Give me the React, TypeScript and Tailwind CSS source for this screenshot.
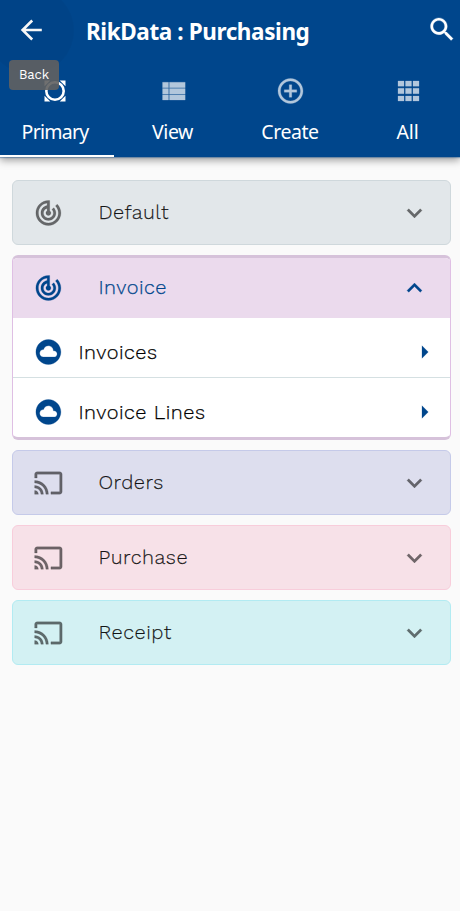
import type { ReactNode } from "react";

const icons = {
  track: "M19.07 4.93l-1.41 1.41C19.1 7.79 20 9.79 20 12c0 4.42-3.58 8-8 8s-8-3.58-8-8c0-4.08 3.05-7.44 7-7.93v2.02C8.16 6.57 6 9.03 6 12c0 3.31 2.69 6 6 6s6-2.69 6-6c0-1.66-.67-3.16-1.76-4.24l-1.41 1.41C15.55 9.9 16 10.9 16 12c0 2.21-1.79 4-4 4s-4-1.79-4-4c0-1.86 1.28-3.41 3-3.86v2.14c-.6.35-1 .98-1 1.72 0 1.1.9 2 2 2s2-.9 2-2c0-.74-.4-1.38-1-1.72V2h-1C6.48 2 2 6.48 2 12s4.48 10 10 10 10-4.48 10-10c0-2.76-1.12-5.26-2.93-7.07z",
  cast: "M21 3H3c-1.1 0-2 .9-2 2v3h2V5h18v14h-7v2h7c1.1 0 2-.9 2-2V5c0-1.1-.9-2-2-2zM1 18v3h3c0-1.66-1.34-3-3-3zm0-4v2c2.76 0 5 2.24 5 5h2c0-3.87-3.13-7-7-7zm0-4v2c4.97 0 9 4.03 9 9h2c0-6.08-4.93-11-11-11z",
  cloud: "M12 2C6.48 2 2 6.48 2 12s4.48 10 10 10 10-4.48 10-10S17.52 2 12 2zm4.5 14H8c-1.66 0-3-1.34-3-3s1.34-3 3-3l.14.01C8.58 8.28 10.13 7 12 7c2.21 0 4 1.79 4 4h.5c1.38 0 2.5 1.12 2.5 2.5S17.88 16 16.5 16z",
  list: "M3 5h4.8v4.4H3zM8.5 5h12.6v4.4H8.5zM3 10h4.8v4.3H3zM8.5 10h12.6v4.3H8.5zM3 14.9h4.8v4.3H3zM8.5 14.9h12.6v4.3H8.5z",
  add: "M13 7h-2v4H7v2h4v4h2v-4h4v-2h-4V7zm-1-5C6.48 2 2 6.48 2 12s4.48 10 10 10 10-4.48 10-10S17.52 2 12 2zm0 18c-4.41 0-8-3.59-8-8s3.59-8 8-8 8 3.59 8 8-3.59 8-8 8z",
  grid: "M4 4h4.8v4.2H4zM10 4h4.8v4.2H10zM16 4h4.8v4.2H16zM4 9.8h4.8v4.4H4zM10 9.8h4.8v4.4H10zM16 9.8h4.8v4.4H16zM4 16h4.8v4H4zM10 16h4.8v4H10zM16 16h4.8v4H16z",
  search: "M15.5 14h-.79l-.28-.27C15.41 12.59 16 11.11 16 9.5 16 5.91 13.09 3 9.5 3S3 5.91 3 9.5 5.91 16 9.5 16c1.61 0 3.09-.59 4.23-1.57l.27.28v.79l5 4.99L20.49 19l-4.99-5zm-6 0C7.01 14 5 11.99 5 9.5S7.01 5 9.5 5 14 7.01 14 9.5 11.99 14 9.5 14z",
  down: "M16.59 8.59L12 13.17 7.41 8.59 6 10l6 6 6-6z",
  up: "M12 8l-6 6 1.41 1.41L12 10.83l4.59 4.58L18 14z",
  right: "M10 17l5-5-5-5v10z",
};

function Icon({ name, className }: { name: keyof typeof icons; className: string }) {
  return (
    <svg viewBox="0 0 24 24" fill="currentColor" stroke="currentColor" strokeWidth="0.2" className={`shrink-0 ${className}`}>
      <path d={icons[name]} />
    </svg>
  );
}

function FrameIcon() {
  return (
    <svg viewBox="0 0 22 22" className="size-[22px]" fill="currentColor">
      <circle cx="11" cy="11" r="8.7" fill="none" stroke="currentColor" strokeWidth="2.6" />
      <path d="M.5 .5h5.8L.5 6.3zM21.5 .5h-5.8l5.8 5.8zM.5 21.5v-5.8l5.8 5.8zM21.5 21.5v-5.8l-5.8 5.8z" />
    </svg>
  );
}

function Tab({ label, width, spacing, children }: { label: string; width: string; spacing: string; children: ReactNode }) {
  return (
    <div className={`flex flex-col items-center ${width}`}>
      <div className="flex h-[30px] items-center text-[#b2c7dc]">{children}</div>
      <span className={`mt-[12px] whitespace-nowrap text-[19.5px] leading-[28px] text-white ${spacing}`}>{label}</span>
    </div>
  );
}

function Group({ label, icon, tone }: { label: string; icon: "track" | "cast"; tone: string }) {
  return (
    <div className={`flex h-[65px] items-center rounded-[6px] border px-[20px] ${tone}`}>
      <Icon name={icon} className="size-[30px] translate-x-[0.4px] text-black/55" />
      <span className="ml-[35.5px] flex-1 pb-[2px] text-[20px] tracking-[0.5px] text-black/85 [-webkit-text-stroke:0.25px]">{label}</span>
      <Icon name="down" className="size-[30px] -translate-x-[0.5px] text-black/55" />
    </div>
  );
}

function Item({ label }: { label: string }) {
  return (
    <div className="flex h-[59px] items-center pl-[20px] pr-[10px] pt-[9px]">
      <Icon name="cloud" className="size-[30px] translate-x-[0.4px] text-[#00468c]" />
      <span className="ml-[15.5px] flex-1 pb-px text-[20px] tracking-[0.5px] text-black [-webkit-text-stroke:0.25px]">{label}</span>
      <Icon name="right" className="size-[30px] -translate-x-[0.5px] text-[#00468c]" />
    </div>
  );
}

export default function App() {
  return (
    <div className="h-[911px] w-[460px] overflow-hidden bg-[#fafafa] font-['Work_Sans',Inter,sans-serif] font-light">
      <header className="relative h-[157px] bg-[#00468c] font-['Segoe_UI','Noto_Sans',sans-serif] font-normal text-white shadow-[0_1px_1px_rgba(0,70,140,0.35),0_3px_8px_rgba(0,0,0,0.4)]">
        <div className="absolute inset-0 overflow-hidden">
          <div className="absolute -left-[13px] -top-[13px] size-[87px] rounded-full bg-black/[0.03]" />
        </div>
        <div className="flex h-[76px] items-start">
          <svg viewBox="0 0 22 22" className="ml-[20px] mt-[19px] size-[22px]" fill="none" stroke="currentColor" strokeWidth="2.6">
            <path d="M21.8 11H3M12.2 1.5L2.6 11l9.6 9.5" />
          </svg>
          <h1 className="ml-[44px] mt-[16px] whitespace-nowrap text-[22.5px] font-bold leading-[32px] tracking-[-0.4px]">RikData : Purchasing</h1>
          <Icon name="search" className="ml-auto mr-[2px] mt-[14px] size-[31px] -translate-x-[0.4px]" />
        </div>
        <nav className="-ml-[4px] flex w-[470px]">
          <Tab label="Primary" width="w-[118px]" spacing="tracking-[-0.75px]"><span className="text-white"><FrameIcon /></span></Tab>
          <Tab label="View" width="w-[117px]" spacing="tracking-[-0.4px]"><Icon name="list" className="size-[30px] translate-x-[0.8px]" /></Tab>
          <Tab label="Create" width="w-[118px]" spacing="tracking-[-0.45px]"><Icon name="add" className="size-[30px] translate-x-[0.5px]" /></Tab>
          <Tab label="All" width="w-[117px]" spacing="tracking-[-0.1px]"><Icon name="grid" className="size-[30px]" /></Tab>
        </nav>
        <div className="absolute bottom-0 left-0 h-[2px] w-[114px] bg-white" />
        <div className="absolute left-[9px] top-[60px] flex h-[30px] w-[50px] items-center justify-center rounded-[4px] bg-[#616161]/90 font-['Work_Sans',Inter,sans-serif] text-[13px] tracking-[-0.1px]">Back</div>
      </header>
      <main className="flex flex-col gap-[10px] pl-[12px] pr-[9.5px] pt-[23px]">
        <Group label="Default" icon="track" tone="border-[#cfd8dc] bg-[#e2e7ea]" />
        <section className="h-[185px] overflow-hidden rounded-[6px] border border-y-[3px] border-x-[#dfbfe4] border-y-[#d6c2da] bg-white">
          <div className="flex h-[60px] items-center bg-[#ebdaed] px-[20px] text-[#00468c]">
            <Icon name="track" className="size-[30px] translate-x-[0.4px]" />
            <span className="ml-[35.5px] flex-1 pb-[2px] text-[20px] tracking-[0.5px] [-webkit-text-stroke:0.25px]">Invoice</span>
            <Icon name="up" className="size-[30px] -translate-x-[0.5px]" />
          </div>
          <div className="border-b border-[#d5e0e2]"><Item label="Invoices" /></div>
          <Item label="Invoice Lines" />
        </section>
        <Group label="Orders" icon="cast" tone="border-[#c5cae9] bg-[#dddeee]" />
        <Group label="Purchase" icon="cast" tone="border-[#f8cddb] bg-[#f7e1e8]" />
        <Group label="Receipt" icon="cast" tone="border-[#b2ebf2] bg-[#d3f1f3]" />
      </main>
    </div>
  );
}
